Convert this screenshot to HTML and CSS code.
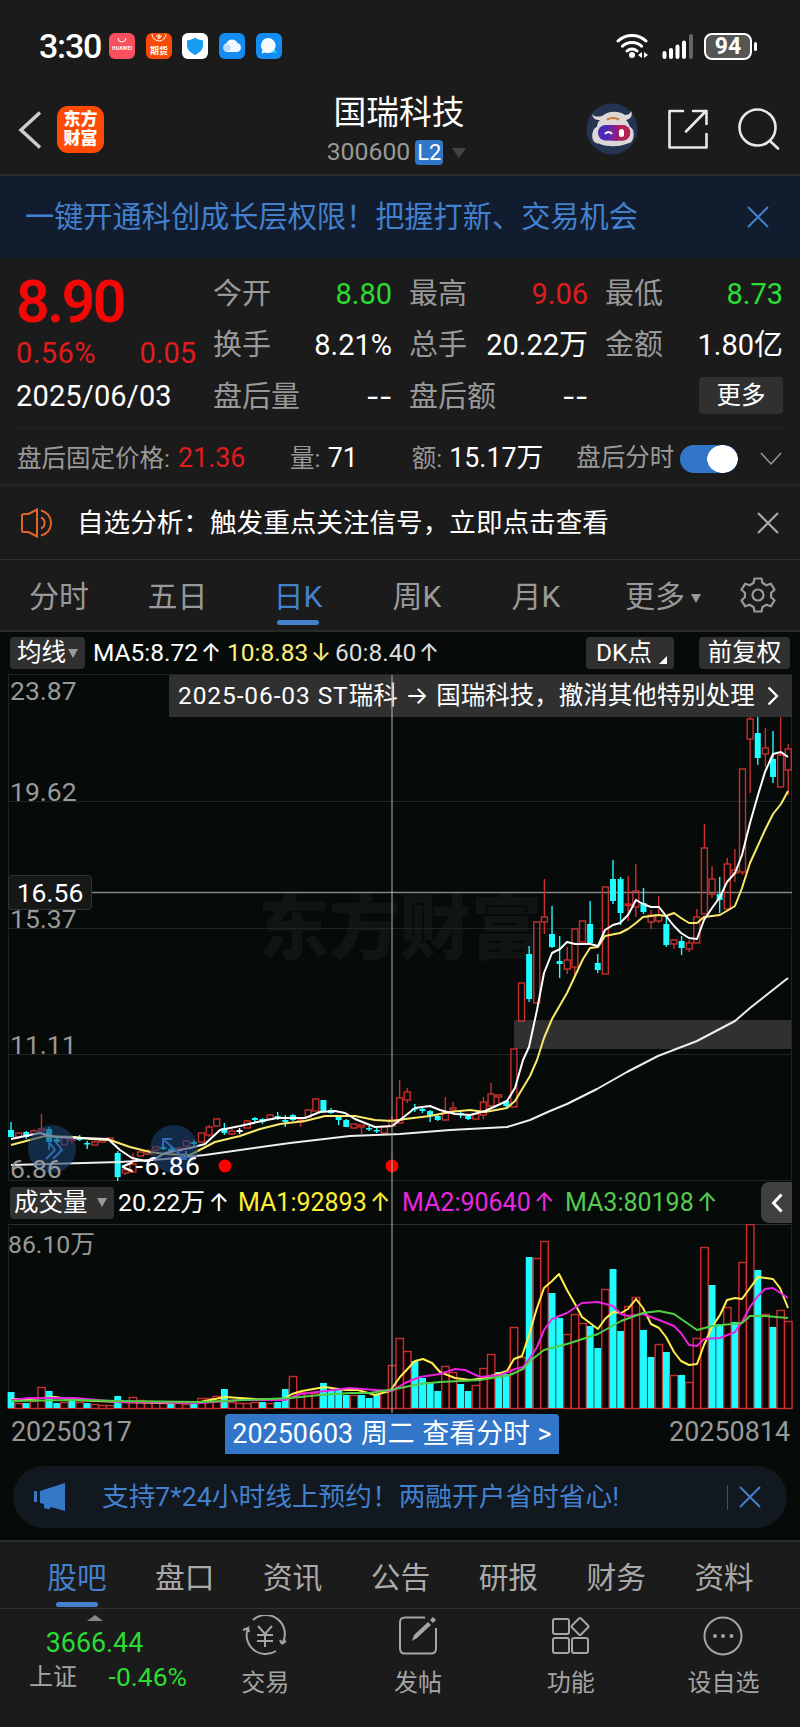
FILE: index.html
```html
<!DOCTYPE html>
<html lang="zh-CN">
<head>
    <meta charset="UTF-8">
    <meta name="viewport" content="width=device-width, initial-scale=1.0">
    <title>国瑞科技 300600</title>
    <link rel="stylesheet" href="styles.css">
</head>
<body>
    <div class="status-bar">
        <span class="clock">3:30</span>
        <div class="app-icons">
            <svg width="26" height="26" viewBox="0 0 26 26"><rect width="26" height="26" rx="6" fill="#f8505c"/><path d="M9 5a4 4 0 0 0 8 0" fill="none" stroke="#fff" stroke-width="1"/><text x="3" y="17" font-size="5" font-weight="700" fill="#fff" textLength="20">HUAWEI</text></svg>
            <svg width="26" height="26" viewBox="0 0 26 26"><rect width="26" height="26" rx="6" fill="#f94a08"/><path d="M6 1a7 7 0 0 0 14 0" fill="none" stroke="#fff" stroke-width="1"/><path d="M10 3h6M13 1v5M11 6l4-2" stroke="#fff"/><text x="13" y="20.500" font-size="9" font-weight="700" text-anchor="middle" fill="#fff">期货</text></svg>
            <svg width="26" height="26" viewBox="0 0 26 26"><rect width="26" height="26" rx="6" fill="#fff"/><path d="M13 4.500c2.500 2 5 2.500 8 3v5c0 4.500-4 7.500-8 9.500-4-2-8-5-8-9.500v-5c3-.5 5.500-1 8-3z" fill="#189cf3"/></svg>
            <svg width="26" height="26" viewBox="0 0 26 26"><rect width="26" height="26" rx="6" fill="#138cf3"/><path d="M8.500 19a4.500 4.500 0 0 1-1-8.800A6 6 0 0 1 18.500 10a4.600 4.600 0 0 1-.5 9z" fill="#f0f8ff"/><circle cx="8" cy="15" r="3.500" fill="#b9dcfb"/></svg>
            <svg width="26" height="26" viewBox="0 0 26 26"><rect width="26" height="26" rx="6" fill="#138cf3"/><path d="M14 20h6.500l-1.500-4z" fill="#2bd3f2"/><path d="M12.500 5a7.500 7.500 0 1 1-3 14.500L5.500 20.500l1-3.500A7.500 7.500 0 0 1 12.500 5z" fill="#f4faff"/></svg>
        </div>
        <div class="status-right">
            <svg width="34" height="28" viewBox="0 0 34 28" fill="none" stroke="#fff" stroke-width="3" stroke-linecap="round"><path d="M2 9a20.500 20.500 0 0 1 28 0M6.500 14.200a14 14 0 0 1 19 0M11 19a7.500 7.500 0 0 1 10 0"/><circle cx="16" cy="23" r="3" fill="#fff" stroke="none"/><path d="M26 20v6l-4-3zM28 20v6l4-3z" fill="#fff" stroke="none"/></svg>
            <svg class="signal" width="32" height="26" viewBox="0 0 32 26" stroke="#fff" stroke-width="4" stroke-linecap="round"><path d="M2.500 20v4M9 17v7M15.500 13.500v10.500M22 9.500v14.500"/><path d="M29 3v21" stroke="#666"/></svg>
            <span class="battery">94</span>
        </div>
    </div>

    <header class="title-bar">
        <div class="title-left">
            <svg width="24" height="40" viewBox="0 0 24 40" fill="none" stroke="#ccc" stroke-width="3.500"><path d="M22 2.500L3 20l19 17.500"/></svg>
            <div class="brand">东方<br>财富</div>
        </div>
        <div class="stock">
            <h1>国瑞科技</h1>
            <div class="stock-code">300600<span class="level">L2</span><span class="caret dim"></span></div>
        </div>
        <div class="title-right">
            <svg width="52" height="52" viewBox="0 0 52 52"><circle cx="26" cy="26" r="25.500" fill="#263453"/><path d="M6 11c1 5 4 6 8 6-2 2-3 4-3 7-5 1-7 13-1 16 2 1 3 0 4 1 7 3 19 3 26 0 2-1 5-1 6-3 3-5 2-13-2-14-1-3-2-5-4-7 5-1 7-5 5-9-1 3-3 4-6 4-7-5-17-4-23 1-4 1-8 1-10-2z" fill="#ddd7d8"/><path d="M21 16.500c4-2 8-2 12 0" stroke="#c9762f" stroke-width="2" fill="none"/><rect x="12" y="22" width="32" height="15.500" rx="7.500" fill="#4a2bb5"/><path d="M28 22h8.500a7.700 7.700 0 0 1 0 15.500H28z" fill="#b3224f"/><path d="M24 22h8v15.500h-8z" fill="#7e2292"/><path d="M19 31a4 4 0 0 1 7 0" stroke="#fff" stroke-width="2" fill="none"/><rect x="33" y="26" width="5" height="8" rx="2.500" fill="#fff"/></svg>
            <svg width="42" height="42" viewBox="0 0 42 42" fill="none" stroke="#e8e8e8" stroke-width="2.600" stroke-linecap="round" stroke-linejoin="round"><path d="M16 3H2.500v36.500h37V26M26 3h13.500v13M39 3L19 23.500"/></svg>
            <svg width="42" height="42" viewBox="0 0 42 42" fill="none" stroke="#e8e8e8" stroke-width="2.600" stroke-linecap="round"><circle cx="19.500" cy="19.500" r="18"/><path d="M32 33l8 7.500"/></svg>
        </div>
    </header>

    <div class="promo">
        <span>一键开通科创成长层权限！把握打新、交易机会</span>
        <svg width="22" height="22" viewBox="0 0 22 22" stroke="#4380cd" stroke-width="2"><path d="M1 1l20 20M21 1L1 21"/></svg>
    </div>

    <section class="quote">
        <div class="quote-main">
            <div class="price">8.90</div>
            <div class="change"><span>0.56%</span><span>0.05</span></div>
            <div class="date">2025/06/03</div>
        </div>
        <div class="quote-grid">
            <div class="cell"><span>今开</span><b class="green">8.80</b></div>
            <div class="cell"><span>最高</span><b class="red">9.06</b></div>
            <div class="cell"><span>最低</span><b class="green">8.73</b></div>
            <div class="cell"><span>换手</span><b>8.21%</b></div>
            <div class="cell"><span>总手</span><b>20.22万</b></div>
            <div class="cell"><span>金额</span><b>1.80亿</b></div>
            <div class="cell"><span>盘后量</span><b class="none">--</b></div>
            <div class="cell"><span>盘后额</span><b class="none">--</b></div>
            <div class="cell"><button class="more">更多</button></div>
        </div>
    </section>

    <div class="after-hours">
        <span class="ah-price">盘后固定价格: <b class="red">21.36</b></span>
        <span class="ah-vol">量: <b>71</b></span>
        <span class="ah-amount">额: <b>15.17万</b></span>
        <span class="ah-switch">盘后分时</span>
        <span class="toggle"></span>
        <svg width="22" height="14" viewBox="0 0 22 14" fill="none" stroke="#999" stroke-width="1.500"><path d="M1 1l10 11L21 1"/></svg>
    </div>

    <div class="notice">
        <svg width="36" height="30" viewBox="0 0 36 30" fill="none" stroke="#e2662a" stroke-width="2"><path d="M2 7.500q0-1.500 2-1.500h4.500L17 1.500v27L8.500 24H4q-2 0-2-1.500zM21 9.500a6 6 0 0 1 0 11M21 2.500a12.800 12.800 0 0 1 0 25"/></svg>
        <span>自选分析：触发重点关注信号，立即点击查看</span>
        <svg class="close" width="22" height="22" viewBox="0 0 22 22" stroke="#aaa" stroke-width="2.200"><path d="M1 1l20 20M21 1L1 21"/></svg>
    </div>

    <nav class="periods">
        <span>分时</span>
        <span>五日</span>
        <span class="active">日K</span>
        <span>周K</span>
        <span>月K</span>
        <span>更多<i class="caret small"></i></span>
        <svg width="36" height="36" viewBox="0 0 36 36" fill="none" stroke="#999" stroke-width="2.200" stroke-linejoin="round"><path d="M14.500 1.500h7l1 4.500 4 2.300 4.300-1.600 3.700 6-3.400 3v4.600l3.400 3-3.700 6-4.300-1.600-4 2.300-1 4.500h-7l-1-4.500-4-2.300-4.300 1.600-3.700-6 3.400-3v-4.600l-3.400-3 3.700-6 4.300 1.600 4-2.300z"/><circle cx="18" cy="18" r="5.500"/></svg>
    </nav>

    <main class="charts">
        <div class="ma-bar">
            <span class="chip chip-ma">均线<i class="caret small"></i></span>
            <span class="ma5">MA5:8.72<i class="arrow">↑</i></span>
            <span class="ma10">10:8.83<i class="arrow">↓</i></span>
            <span class="ma60">60:8.40<i class="arrow">↑</i></span>
            <span class="chip chip-dk">DK点<i class="corner"></i></span>
            <span class="chip">前复权</span>
        </div>

        <div class="price-chart">
            <svg id="priceChart" width="800" height="507" viewBox="0 674 800 507"></svg>
            <span class="axis y1">23.87</span>
            <span class="axis y2">19.62</span>
            <span class="axis y3">15.37</span>
            <span class="axis y4">11.11</span>
            <span class="axis y5">6.86</span>
            <span class="low-mark">&lt;-6.86</span>
            <div class="event">
                <span><i class="when">2025-06-03 ST</i>瑞科 <i class="to">→</i> 国瑞科技，撤消其他特别处理</span>
                <svg width="12" height="20" viewBox="0 0 12 20" fill="none" stroke="#fff" stroke-width="2.400"><path d="M1.500 1.500L10 10l-8.500 8.500"/></svg>
            </div>
            <span class="cross-price">16.56</span>
        </div>

        <div class="vol-bar">
            <span class="chip chip-vol">成交量<i class="caret small"></i></span>
            <span class="vol-now">20.22万<i class="arrow">↑</i></span>
            <span class="vol1">MA1:92893<i class="arrow">↑</i></span>
            <span class="vol2">MA2:90640<i class="arrow">↑</i></span>
            <span class="vol3">MA3:80198<i class="arrow">↑</i></span>
            <span class="fold"><svg width="12" height="20" viewBox="0 0 12 20" fill="none" stroke="#fff" stroke-width="3"><path d="M10.500 1.500L2.500 10l8 8.500"/></svg></span>
        </div>

        <div class="vol-chart">
            <svg id="volChart" width="800" height="186" viewBox="0 1224 800 186"></svg>
            <span class="axis vol-axis">86.10万</span>
        </div>
        <div class="cross-line"></div>

        <div class="dates">
            <span>20250317</span>
            <span class="date-tag">20250603 周二 查看分时 &gt;</span>
            <span>20250814</span>
        </div>

        <div class="pill">
            <svg width="34" height="28" viewBox="0 0 34 28" fill="#3478c8"><path d="M1 8h3v11H1zM7 8L32 0v28l-14-4-2 2.500-5-1.500V21l-4-1z"/></svg>
            <span>支持7*24小时线上预约！两融开户省时省心!</span>
            <i class="sep"></i>
            <svg width="22" height="22" viewBox="0 0 22 22" stroke="#4380cd" stroke-width="2"><path d="M1 1l20 20M21 1L1 21"/></svg>
        </div>
    </main>

    <nav class="sections">
        <span class="active">股吧</span>
        <span>盘口</span>
        <span>资讯</span>
        <span>公告</span>
        <span>研报</span>
        <span>财务</span>
        <span>资料</span>
    </nav>

    <footer class="tools">
        <div class="index">
            <i class="up"></i>
            <div class="index-value">3666.44</div>
            <div class="index-row"><span>上证</span><span class="green">-0.46%</span></div>
        </div>
        <div class="tool">
            <svg width="46" height="42" viewBox="0 0 46 42" fill="none" stroke="#a5a5a5" stroke-width="2"><path d="M11 5A19 19 0 0 1 40 29l4-3M40 29l-2-4M34 36A19 19 0 0 1 6 13l-5 2M6 13l1 4"/><path d="M16 11l7 8 7-8M15 20h16M15 26h16M23 19v13"/></svg>
            <span>交易</span>
        </div>
        <div class="tool">
            <svg width="42" height="42" viewBox="0 0 42 42" fill="none" stroke="#a5a5a5" stroke-width="2"><path d="M28 2.500H8q-5 0-5 5v26q0 5 5 5h26q5 0 5-5V13"/><path d="M15 26l2-6L31 7l3 3-14 13zM33 5l3-3 3 3-3 3z" fill="#a5a5a5" stroke="none"/></svg>
            <span>发帖</span>
        </div>
        <div class="tool">
            <svg width="42" height="42" viewBox="0 0 42 42" fill="none" stroke="#a5a5a5" stroke-width="2"><rect x="3" y="4" width="16" height="15" rx="2"/><rect x="3" y="23" width="16" height="15" rx="2"/><rect x="22" y="23" width="16" height="15" rx="2"/><path d="M29 3.500q1-1 2 0l7 7q1 1 0 2l-7 7q-1 1-2 0l-7-7q-1-1 0-2z"/></svg>
            <span>功能</span>
        </div>
        <div class="tool">
            <svg width="42" height="42" viewBox="0 0 42 42" fill="none" stroke="#a5a5a5" stroke-width="2"><circle cx="21" cy="21" r="18.500"/><g fill="#a5a5a5" stroke="none"><circle cx="13" cy="21" r="2"/><circle cx="21" cy="21" r="2"/><circle cx="29.500" cy="21" r="2"/></g></svg>
            <span>设自选</span>
        </div>
    </footer>

    <script src="chart.js"></script>
</body>
</html>
```
FILE: styles.css
```css
* {
    box-sizing: border-box;
}

body {
    margin: 0;
    width: 800px;
    height: 1727px;
    overflow: hidden;
    background-color: #1b1b1b;
    color: #fff;
    font-family: Roboto, "Noto Sans CJK SC", sans-serif;
    font-size: 24.5px;
    line-height: 1;
    white-space: nowrap;
}

svg {
    display: block;
    flex: none;
}

b,
i {
    font-weight: normal;
    font-style: normal;
}

.red {
    color: #e01b1b;
}

.green {
    color: #2bdc33;
}

.caret {
    display: inline-block;
    border: 7px solid transparent;
    border-top: 10px solid #999;
    border-bottom: 0;
}

.caret.dim {
    border-top-color: #444;
}

.caret.small {
    border-width: 9px 5px 0;
}

/* status bar */
.status-bar {
    display: flex;
    align-items: center;
    height: 92px;
    padding: 0 48px 0 39px;
}

.clock {
    width: 70px;
    font-size: 34px;
    font-weight: 500;
    letter-spacing: -1.2px;
}

.app-icons {
    display: flex;
    gap: 10.700px;
}

.status-right {
    display: flex;
    align-items: center;
    margin-left: auto;
}

.signal {
    margin: 0 10px 0 12px;
}

.battery {
    position: relative;
    width: 48px;
    height: 27px;
    border: 2px solid #fff;
    border-radius: 8px;
    background-color: #555;
    text-align: center;
    font-size: 23px;
    font-weight: 700;
    line-height: 24px;
}

.battery::after {
    content: "";
    position: absolute;
    right: -7px;
    top: 7px;
    width: 3px;
    height: 9px;
    border-radius: 2px;
    background-color: #fff;
}

/* title bar */
.title-bar {
    display: grid;
    grid-template-columns: 1fr auto 1fr;
    height: 84px;
    padding: 0 20px 0 18px;
    border-bottom: 2px solid #292929;
}

.title-left {
    display: flex;
    align-items: center;
    gap: 15px;
    padding-bottom: 9px;
}

.title-left svg {
    margin-top: 2px;
}

.brand {
    width: 47px;
    height: 47px;
    margin-top: 2px;
    padding-top: 4px;
    border-radius: 11px;
    background-color: #fd4a05;
    text-align: center;
    font-size: 17px;
    font-weight: 900;
    line-height: 19px;
}

.stock {
    text-align: center;
}

h1 {
    margin: 4px 0 0;
    font-size: 32.800px;
    font-weight: 400;
    line-height: 34px;
}

.stock-code {
    display: flex;
    align-items: center;
    margin: 10px 0 0 -5px;
    color: #999;
    font-size: 24.800px;
}

.level {
    width: 28px;
    height: 25px;
    margin: 0 9px 0 5px;
    border-radius: 4px;
    background-color: #3176c9;
    color: #fff;
    font-size: 22px;
    line-height: 25px;
}

.title-right {
    display: flex;
    justify-content: flex-end;
    align-items: center;
    gap: 29px;
    padding-bottom: 10px;
}

.title-right svg {
    margin-top: 1px;
}

/* promo */
.promo {
    display: flex;
    align-items: center;
    justify-content: space-between;
    height: 82px;
    padding: 0 31px 0 25px;
    background-color: #111d2e;
    color: #4380cd;
    font-size: 29.200px;
}

.promo span {
    margin-top: 2px;
}

/* quote */
.quote {
    display: flex;
    height: 171px;
    margin: 0 16px;
    border-bottom: 1px solid #242424;
}

.quote-main {
    width: 197px;
    font-size: 29px;
}

.price {
    height: 73px;
    padding-top: 10px;
    color: #f30808;
    font-size: 59px;
    font-weight: 600;
    line-height: 68px;
    letter-spacing: -2.500px;
}

.change {
    display: flex;
    justify-content: space-between;
    width: 180px;
    height: 43px;
    color: #e01b1b;
    line-height: 45px;
}

.change span:first-child {
    letter-spacing: 0.4px;
}

.date {
    line-height: 45px;
    letter-spacing: 0.15px;
}

.quote-grid {
    display: grid;
    flex: 1;
    grid-template-columns: 179px 179px 178px;
    grid-auto-rows: 51.500px;
    column-gap: 17px;
    padding-top: 10px;
    font-size: 29px;
}

.cell {
    display: flex;
    align-items: center;
    justify-content: space-between;
    padding-top: 1px;
}

.cell span {
    color: #999;
}

.cell .none {
    transform: scaleX(1.35);
    transform-origin: right;
    letter-spacing: 1.500px;
    margin-right: -1.500px;
}

.more {
    width: 84px;
    height: 37px;
    margin: -3px 0 0 auto;
    padding: 0;
    border: 0;
    border-radius: 4px;
    background-color: #303030;
    color: #fff;
    font: 24.500px/34px Roboto, "Noto Sans CJK SC", sans-serif;
}

/* after hours */
.after-hours {
    display: flex;
    align-items: center;
    height: 58px;
    padding: 4px 18px 0 17px;
    border-bottom: 3px solid #232323;
    color: #999;
}

.after-hours b {
    font-size: 26.800px;
}

.after-hours b:not(.red) {
    color: #fff;
}

.ah-price {
    width: 274px;
    word-spacing: 2px;
}

.ah-vol {
    width: 122px;
    word-spacing: 1px;
}

.ah-amount {
    width: 165px;
    word-spacing: 1px;
}

.toggle {
    width: 58px;
    height: 28px;
    margin: 0 22px 0 6px;
    border-radius: 14px;
    background: radial-gradient(ellipse 15.500px 14px at 42.500px 14px, #fff 97%, transparent 100%) #3176c9;
}

/* notice */
.notice {
    display: flex;
    align-items: center;
    height: 73px;
    padding: 0 21px 0 20px;
    border-bottom: 1px solid #303030;
    font-size: 26.600px;
}

.notice span {
    margin: 1px 0 0 21px;
}

.close {
    margin-left: auto;
}

/* period tabs */
.periods {
    display: grid;
    grid-template-columns: 118px 119px 122px 116px 122px 132px 58px;
    align-items: center;
    justify-items: center;
    height: 72px;
    border-bottom: 2px solid #262a29;
    color: #999;
    font-size: 30px;
}

.periods span {
    height: 70px;
    line-height: 73px;
}

.periods .caret {
    margin-left: 6px;
    vertical-align: 4px;
}

.active {
    position: relative;
    color: #4380cd;
}

.active::after {
    content: "";
    position: absolute;
    left: 50%;
    bottom: 5px;
    width: 42px;
    height: 5px;
    margin-left: -21px;
    border-radius: 3px;
    background-color: #4380cd;
}

/* charts */
.charts {
    position: relative;
    height: 908px;
    background-color: #060a09;
}

.chip {
    display: flex;
    align-items: center;
    height: 32px;
    border-radius: 4px;
    background-color: #303030;
    color: #fff;
    font-size: 24.500px;
    line-height: 30px;
}

.arrow {
    display: inline-block;
    width: 23px;
    font-family: Inter, sans-serif;
    text-align: right;
}

.ma-bar {
    display: flex;
    align-items: center;
    height: 42px;
    padding: 0 10px;
    font-size: 24.500px;
}

.chip-ma {
    width: 75px;
    padding-left: 7px;
    gap: 2px;
}

.ma5 {
    width: 134px;
    margin-left: 8px;
}

.ma10 {
    width: 108px;
    color: #fbf07a;
}

.ma60 {
    color: #ddd;
}

.chip-dk {
    width: 88px;
    margin-left: auto;
    padding-left: 10px;
}

.corner {
    margin: 14px 0 0 7px;
    border-bottom: 8px solid #fff;
    border-left: 8px solid transparent;
}

.chip:last-child {
    width: 91px;
    margin-left: 25px;
    justify-content: center;
}

.price-chart,
.vol-chart {
    position: relative;
}

.axis {
    position: absolute;
    left: 10px;
    color: #999;
    font-size: 26.500px;
    line-height: 26px;
}

.y1 { top: 4px; }
.y2 { top: 105px; }
.y3 { top: 232px; }
.y4 { top: 358px; }
.y5 { top: 482px; }

.vol-axis {
    top: 8px;
    left: 8px;
    font-size: 24.800px;
}

.low-mark {
    position: absolute;
    left: 121px;
    top: 479px;
    font-size: 26.500px;
    line-height: 26px;
    letter-spacing: 1.300px;
}

.event {
    position: absolute;
    left: 169px;
    top: 1px;
    display: flex;
    align-items: center;
    justify-content: space-between;
    width: 623px;
    height: 42px;
    padding: 0 13px 0 9px;
    background-color: #303030;
}

.when {
    letter-spacing: 0.900px;
}

.to {
    margin: 0 1.500px;
    font-family: Inter, sans-serif;
}

.cross-price {
    position: absolute;
    left: 8px;
    top: 201px;
    width: 84px;
    height: 35px;
    border: 1px solid #333;
    border-radius: 4px;
    background-color: #161818;
    text-align: center;
    font-size: 26.500px;
    line-height: 34px;
}

.cross-line {
    position: absolute;
    left: 391px;
    top: 43px;
    width: 2px;
    height: 738px;
    background-color: rgba(170, 170, 170, 0.55);
}

.vol-bar {
    display: flex;
    align-items: center;
    height: 43px;
    padding: 0 8px 0 10px;
    font-size: 25px;
}

.chip-vol {
    width: 104px;
    padding-left: 4px;
    gap: 9px;
}

.vol-now {
    width: 120px;
    margin-left: 4px;
    font-size: 24.800px;
}

.vol1 {
    width: 164px;
    color: #ffee32;
}

.vol2 {
    width: 163px;
    color: #ea27e0;
}

.vol3 {
    color: #55cc50;
}

.vol-bar .arrow {
    width: 24px;
}

.fold {
    display: flex;
    align-items: center;
    justify-content: center;
    width: 31px;
    height: 41px;
    margin-left: auto;
    border-radius: 8px 0 0 8px;
    background-color: #404040;
}

.dates {
    display: grid;
    grid-template-columns: 214px 334px 1fr;
    height: 56px;
    padding: 4px 10px 0 11px;
    color: #999;
    font-size: 26.900px;
    line-height: 36px;
}

.dates span:last-child {
    text-align: right;
}

.date-tag {
    height: 40px;
    border-radius: 4px 4px 0 0;
    background-color: #3176c9;
    color: #fff;
    text-align: center;
    line-height: 40px;
    word-spacing: 1px;
}

.pill {
    display: flex;
    align-items: center;
    width: 774px;
    height: 62px;
    margin-left: 13px;
    padding: 0 26px 0 20px;
    border-radius: 31px;
    background-color: #111820;
    color: #4380cd;
    font-size: 26.700px;
}

.pill span {
    margin-left: 35px;
}

.sep {
    width: 1px;
    height: 25px;
    margin: 0 11px 0 auto;
    background-color: #2c5483;
}

/* bottom navigation */
.sections {
    display: grid;
    grid-template-columns: repeat(7, 1fr);
    height: 69px;
    padding: 0 22px 0 23px;
    border-top: 2px solid #2b2e2d;
    border-bottom: 1px solid #303030;
    color: #aaa;
    text-align: center;
    font-size: 29.700px;
    line-height: 72px;
}

.sections span {
    height: 66px;
}

.sections .active::after {
    bottom: 1px;
}

.tools {
    display: grid;
    grid-template-columns: 189px repeat(4, 152.700px);
    color: #a5a5a5;
    font-size: 24px;
}

.index {
    position: relative;
    padding-top: 21px;
    text-align: center;
}

.up {
    position: absolute;
    left: 87px;
    top: 6px;
    border: 8px solid transparent;
    border-top: 0;
    border-bottom: 6px solid #888;
}

.index-value {
    color: #2bdc33;
    font-size: 26.800px;
}

.index-row {
    display: flex;
    justify-content: space-between;
    align-items: center;
    margin-top: 6px;
    padding: 0 2px 0 29px;
    line-height: 28px;
}

.index-row .green {
    font-size: 26.500px;
}

.tool {
    display: flex;
    flex-direction: column;
    align-items: center;
    gap: 14px;
    padding-top: 6px;
}
```
FILE: chart.js
```js
var STEP = 7.62;
var LEFT = 11;
var RED = "#c8302f";
var CYAN = "#1ffcff";

// kind (r = up, c = down), high, body top, body bottom, low, volume top
var days = [
    ["c",1122,1130,1137,1137,1392], ["r",1133,1133,1137,1139,1403], ["c",1131,1132,1137,1139,1403], ["r",1129,1131,1134,1135,1401],
    ["r",1114,1129,1131,1133,1387], ["c",1127,1129,1142,1150,1391], ["c",1138,1139,1142,1144,1403], ["r",1137,1138,1145,1145,1402],
    ["r",1138,1139,1140,1144,1399,"c"], ["c",1135,1137,1140,1141,1402,"r"], ["c",1141,1143,1144,1149,1403], ["r",1141,1142,1145,1145,1404],
    ["r",1138,1140,1142,1142,1405], ["r",1137,1138,1140,1141,1405], ["c",1151,1153,1177,1181,1396], ["r",1168,1170,1173,1175,1402],
    ["r",1153,1164,1172,1172,1397], ["r",1151,1152,1156,1156,1400], ["r",1149,1151,1154,1155,1401], ["r",1146,1147,1150,1151,1402],
    ["c",1144,1147,1149,1150,1403,"r"], ["c",1147,1149,1151,1152,1404], ["r",1147,1148,1151,1153,1403], ["r",1140,1141,1146,1147,1404],
    ["c",1140,1142,1144,1146,1404], ["r",1133,1133,1142,1142,1398], ["r",1125,1127,1135,1137,1398], ["r",1118,1119,1126,1126,1396],
    ["c",1123,1128,1133,1135,1389], ["r",1129,1131,1134,1135,1402], ["w",1128,1130,1132,1134,1403,"r"], ["r",1120,1121,1128,1128,1403],
    ["c",1117,1118,1120,1123,1402,"r"], ["c",1118,1119,1122,1124,1402], ["r",1114,1115,1119,1119,1403], ["c",1112,1116,1119,1120,1402],
    ["c",1115,1120,1122,1127,1389], ["c",1114,1115,1120,1121,1376,"r"], ["r",1118,1120,1122,1127,1392], ["r",1109,1110,1117,1117,1393],
    ["r",1098,1099,1111,1111,1393], ["c",1100,1100,1111,1111,1383], ["c",1108,1110,1113,1114,1390], ["c",1116,1117,1120,1125,1390],
    ["c",1119,1120,1127,1127,1395], ["r",1124,1124,1128,1129,1395], ["r",1125,1125,1127,1134,1395,"c"], ["c",1126,1128,1129,1131,1398],
    ["c",1127,1130,1131,1133,1395], ["r",1126,1127,1133,1135,1390], ["r",1116,1120,1126,1127,1365], ["r",1080,1098,1123,1124,1338],
    ["r",1088,1092,1100,1103,1351], ["c",1104,1108,1109,1112,1361], ["c",1107,1109,1111,1113,1378], ["c",1110,1111,1116,1122,1382],
    ["c",1115,1116,1120,1121,1391], ["r",1097,1113,1120,1120,1366], ["r",1102,1108,1110,1113,1372], ["c",1111,1113,1114,1118,1384],
    ["c",1114,1116,1119,1120,1391], ["r",1113,1114,1119,1119,1385], ["r",1097,1102,1115,1119,1368], ["r",1083,1094,1106,1107,1354],
    ["r",1094,1095,1097,1103,1372,"c"], ["c",1100,1101,1106,1107,1374], ["r",1049,1049,1107,1107,1327], ["r",983,983,1021,1021,1357],
    ["c",946,954,999,1002,1257], ["r",922,922,1003,1003,1258], ["r",879,917,922,934,1241], ["c",906,934,947,948,1293],
    ["c",936,961,964,978,1318], ["r",947,960,969,974,1334], ["r",929,929,967,975,1314], ["r",921,921,942,942,1323],
    ["c",901,924,943,944,1326], ["c",954,963,970,973,1348], ["r",887,887,974,974,1289], ["c",860,879,901,904,1269],
    ["c",877,879,913,925,1331], ["r",876,904,905,921,1306], ["r",864,891,907,917,1297], ["c",888,903,912,914,1330],
    ["r",910,915,922,929,1357,"c"], ["r",896,915,921,923,1344], ["c",917,924,945,947,1352], ["r",939,940,944,949,1375],
    ["c",936,941,948,955,1375], ["r",940,943,949,952,1382], ["r",909,917,943,943,1338], ["r",824,848,914,914,1247],
    ["r",866,879,894,898,1285,"c"], ["c",877,894,900,913,1324], ["r",858,864,909,909,1307], ["r",849,870,873,882,1322,"c"],
    ["r",769,769,872,875,1262], ["r",700,719,739,793,1224], ["c",700,733,758,765,1270], ["r",728,748,754,767,1314],
    ["c",731,759,777,783,1327], ["r",700,755,787,787,1310], ["r",744,749,770,795,1321]
];

function line(x1, y1, x2, y2, color, width) {
    return '<path d="M' + x1 + " " + y1 + "L" + x2 + " " + y2 + '" stroke="' + color + '" stroke-width="' + width + '"/>';
}

function curve(points, color) {
    return '<polyline points="' + points + '" fill="none" stroke="' + color + '" stroke-width="2" stroke-linejoin="round"/>';
}

function drawPrice() {
    var out = '<text x="258" y="953" font-size="71" font-weight="900" fill="#101413" font-family="Noto Sans CJK SC">东方财富</text>';
    out += '<rect x="514" y="1020" width="278" height="29" fill="#303030"/>';
    [674.5, 801.5, 928.5, 1054.5, 1180.5].forEach(function(y) {
        out += line(8, y, 792, y, "#202423", 1);
    });
    out += line(8.5, 674, 8.5, 1181, "#202423", 1) + line(791.5, 674, 791.5, 1181, "#202423", 1);
    out += line(92, 892.5, 792, 892.5, "#858585", 1.4);

    days.forEach(function(d, i) {
        var x = LEFT + i * STEP;
        var h = Math.max(d[3] - d[2], 1.5);
        if (d[0] === "r") {
            out += line(x, d[1], x, d[2], RED, 1.4) + line(x, d[3], x, d[4], RED, 1.4);
            out += '<rect x="' + (x - 3) + '" y="' + d[2] + '" width="6" height="' + h + '" fill="none" stroke="' + RED + '" stroke-width="1.4"/>';
        } else {
            var color = d[0] === "w" ? "#fff" : CYAN;
            out += line(x, d[1], x, d[4], color, 1.4);
            out += '<rect x="' + (x - 3) + '" y="' + d[2] + '" width="6" height="' + h + '" fill="' + color + '"/>';
        }
    });

    out += curve("11,1165 120,1162 165,1159 205,1155 290,1143 350,1136 400,1134 450,1130 507,1127 530,1120 550,1111 567,1104 597,1089 627,1072 658,1056 697,1041 735,1021 750,1008 788,978", "#eee");
    out += curve("11,1145 45,1136 75,1137 90,1139 110,1140 130,1147 150,1152 165,1154 190,1155 215,1142 240,1136 260,1129 280,1124 305,1121 325,1116 355,1116 375,1120 392,1121 405,1119 430,1116 450,1112 470,1110 485,1112 507,1108 515,1101 530,1076 537,1060 544,1038 552,1019 567,993 583,959 590,948 598,947 605,936 620,933 628,929 636,923 643,917 659,915 666,916 674,913 681,918 689,923 697,923 704,917 720,915 735,906 742,888 750,863 765,830 773,814 781,804 788,791", "#fbe96a");
    out += curve("11,1139 40,1133 55,1137 108,1139 120,1150 132,1158 145,1161 153,1160 165,1153 190,1148 205,1144 220,1130 240,1126 262,1121 277,1118 305,1118 320,1112 335,1111 345,1113 355,1119 375,1127 392,1126 400,1120 415,1108 430,1106 440,1110 455,1114 470,1115 485,1111 507,1101 515,1088 523,1060 529,1047 537,1010 544,973 552,953 560,949 567,942 575,944 590,944 598,946 605,930 613,925 620,923 628,915 636,900 643,904 651,907 659,907 666,916 674,926 681,933 689,938 697,939 704,920 712,908 720,897 727,882 735,873 742,855 750,823 758,795 765,772 773,754 781,752 788,757", "#fff");

    // floating scroll / expand buttons
    out += '<circle cx="52" cy="1149" r="24" fill="#1d4070" fill-opacity="0.6"/><circle cx="174" cy="1149" r="24" fill="#1d4070" fill-opacity="0.6"/>';
    out += '<path d="M46 1159l9-9-7-9M53 1159l9-9-7-9M172 1139h-9v9M163 1139l22 20M186 1151v8h-9" fill="none" stroke="#2f6ab5" stroke-width="2"/>';
    out += '<circle cx="225" cy="1166" r="6.500" fill="#f00"/><circle cx="392" cy="1166" r="6.500" fill="#f00"/>';
    document.getElementById("priceChart").innerHTML = out;
}

function drawVolume() {
    var out = line(8, 1224.5, 792, 1224.5, "#2a2e2d", 1) + line(8.5, 1224, 8.5, 1409, "#202423", 1) + line(791.5, 1224, 791.5, 1409, "#202423", 1);
    days.forEach(function(d, i) {
        var x = LEFT + i * STEP;
        var kind = d[6] || d[0];
        if (kind === "c") {
            out += '<rect x="' + (x - 3.4) + '" y="' + d[5] + '" width="6.900" height="' + (1408.5 - d[5]) + '" fill="' + CYAN + '"/>';
        } else {
            out += '<rect x="' + (x - 3.6) + '" y="' + (d[5] + 0.5) + '" width="7.400" height="' + (1408 - d[5]) + '" fill="#120303" stroke="' + RED + '" stroke-width="1.4"/>';
        }
    });
    out += line(8, 1408.5, 792, 1408.5, RED, 1);
    out += curve("11,1399 30,1399 55,1397 75,1400 120,1402 160,1403 200,1402 225,1397 255,1399 282,1400 292,1394 302,1391 325,1387 345,1390 358,1390 375,1395 390,1391 400,1377 415,1361 423,1359 432,1363 440,1372 455,1378 470,1380 485,1378 497,1374 507,1371 514,1359 522,1356 529,1335 537,1308 544,1288 552,1281 559,1274 567,1290 575,1304 582,1317 598,1329 605,1319 613,1312 621,1313 628,1309 636,1299 643,1308 651,1324 659,1328 666,1337 674,1352 681,1361 689,1365 697,1364 704,1345 712,1327 720,1315 727,1300 735,1298 742,1299 750,1288 758,1277 773,1279 780,1288 788,1308", "#fff04a");
    out += curve("11,1400 30,1398 75,1398 120,1402 200,1403 240,1400 285,1400 300,1394 325,1391 350,1388 375,1390 392,1391 405,1383 420,1377 440,1374 455,1369 465,1370 480,1377 500,1375 515,1369 523,1367 530,1358 537,1347 544,1330 552,1319 567,1313 582,1303 598,1302 613,1306 621,1314 628,1316 643,1314 659,1320 674,1326 681,1333 689,1345 697,1346 704,1339 720,1338 735,1332 742,1322 750,1307 758,1296 765,1289 773,1288 788,1298", "#e923df");
    out += curve("11,1401 75,1400 120,1401 200,1402 270,1399 290,1398 320,1395 350,1393 370,1393 395,1389 420,1384 440,1382 480,1380 510,1375 523,1369 530,1361 544,1350 567,1344 598,1334 621,1321 643,1313 659,1311 674,1314 697,1330 712,1326 742,1323 750,1316 765,1316 788,1318", "#50cf45");
    document.getElementById("volChart").innerHTML = out;
}

drawPrice();
drawVolume();
```
